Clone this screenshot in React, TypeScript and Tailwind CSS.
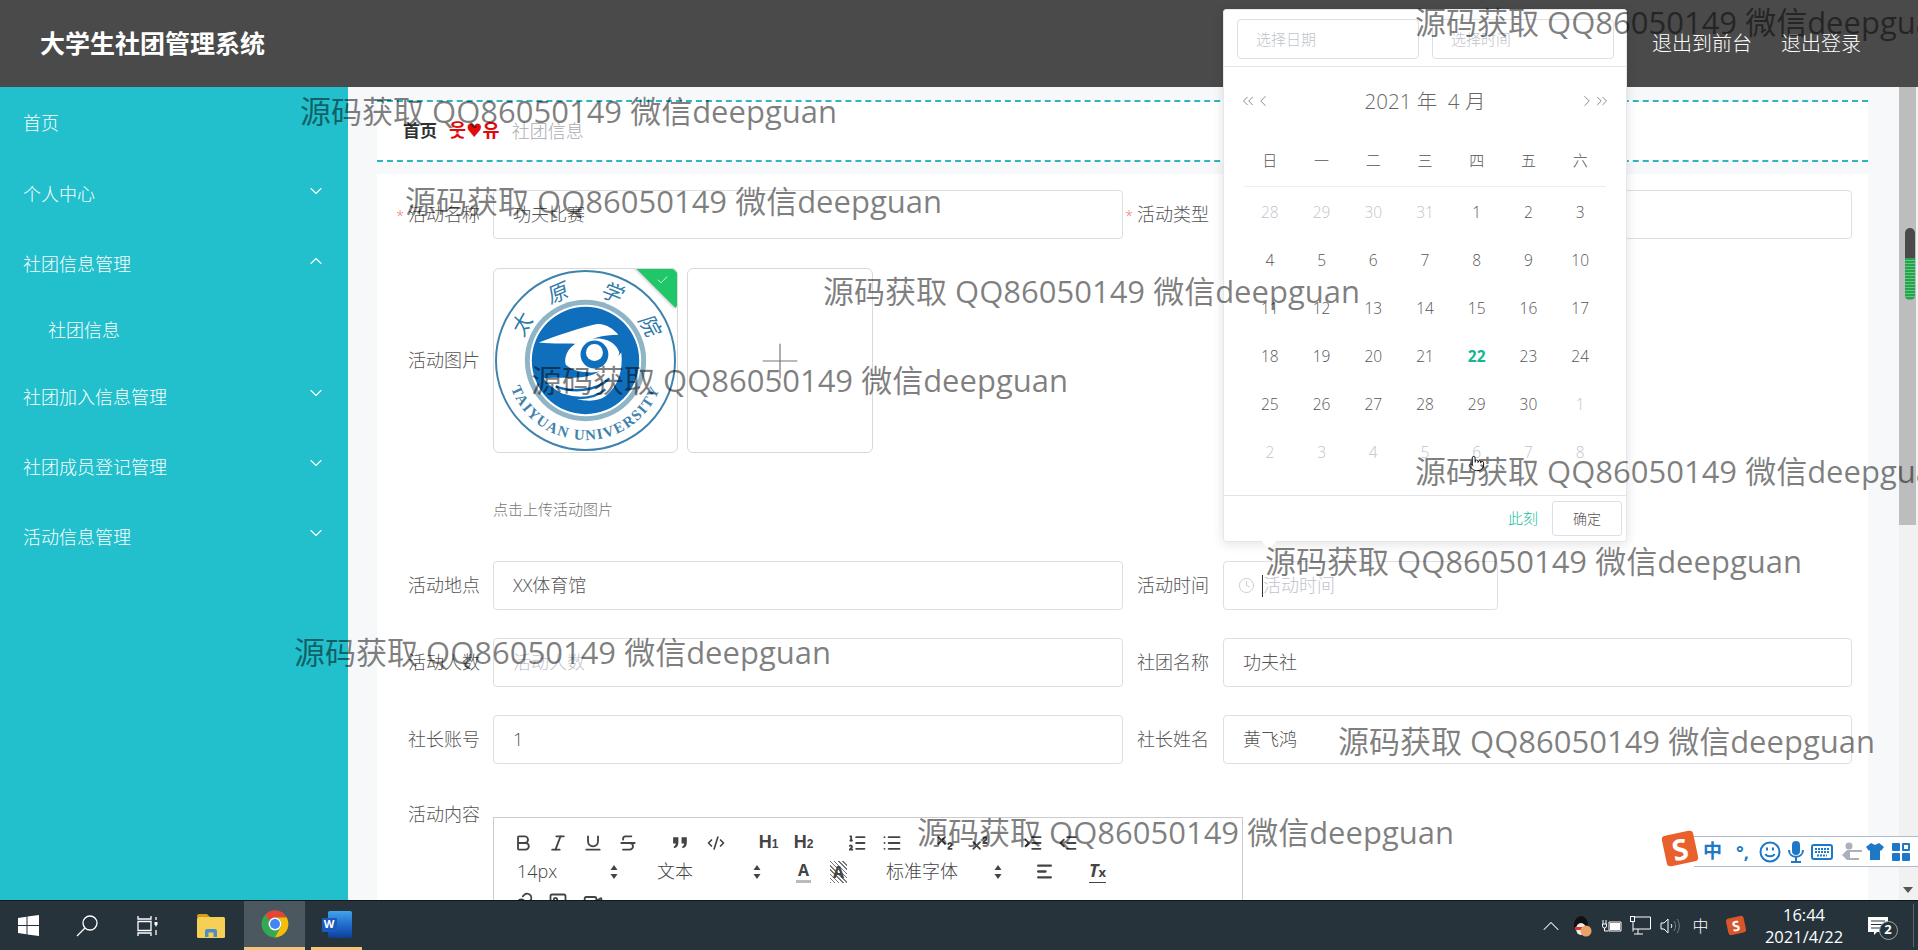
import {
  Bold,
  ChevronDown,
  ChevronLeft,
  ChevronRight,
  ChevronUp,
  ChevronsLeft,
  ChevronsRight,
  Clock,
  Check,
  CodeXml,
  Image,
  Indent,
  Italic,
  Link,
  List,
  ListOrdered,
  Outdent,
  Plus,
  Pointer,
  Strikethrough,
  Subscript,
  Superscript,
  Underline,
  Video,
} from 'lucide-react';
import type { ReactNode } from 'react';

const menu = [
  { label: '首页', h: 'h-[70px]' },
  { label: '个人中心', arrow: 'down', h: 'h-[73px]' },
  { label: '社团信息管理', arrow: 'up', h: 'h-[67px]' },
  { label: '社团信息', sub: true, h: 'h-[64px]' },
  { label: '社团加入信息管理', arrow: 'down', h: 'h-[70px]' },
  { label: '社团成员登记管理', arrow: 'down', h: 'h-[70px]' },
  { label: '活动信息管理', arrow: 'down', h: 'h-[70px]' },
];

const weeks = ['日', '一', '二', '三', '四', '五', '六'];
const days = [
  28, 29, 30, 31, 1, 2, 3, 4, 5, 6, 7, 8, 9, 10, 11, 12, 13, 14, 15, 16, 17, 18, 19, 20, 21, 22, 23, 24, 25, 26, 27, 28,
  29, 30, 1, 2, 3, 4, 5, 6, 7, 8,
];

const marks = [
  { id: 1, cls: 'left-[300px] top-[89px]' },
  { id: 2, cls: 'left-[405px] top-[179px]' },
  { id: 3, cls: 'left-[823px] top-[269px]' },
  { id: 4, cls: 'left-[531px] top-[358px]' },
  { id: 5, cls: 'left-[1415px] top-[0px]' },
  { id: 6, cls: 'left-[1415px] top-[449px]' },
  { id: 7, cls: 'left-[1265px] top-[539px]' },
  { id: 8, cls: 'left-[294px] top-[630px]' },
  { id: 9, cls: 'left-[1338px] top-[719px]' },
  { id: 10, cls: 'left-[917px] top-[810px]' },
];

const sealChars = [
  { ch: '太', deg: -61 },
  { ch: '原', deg: -23 },
  { ch: '学', deg: 21 },
  { ch: '院', deg: 61 },
];

function Field({ label, value, placeholder, star, width, labelCls }: { label: string; value?: string; placeholder?: string; star?: boolean; width: string; labelCls: string }) {
  return (
    <div className="flex">
      <div className={`${labelCls} text-right leading-[49px] text-[#555]`}>
        {star && <span className="mr-[4px] text-[14px] text-[#f56c6c]">*</span>}
        {label}
      </div>
      <div className={`${width} h-[49px] rounded-[4px] border border-[#dcdfe6] bg-white pl-[19px] leading-[47px]`}>
        {value ? <span className="text-[#555]">{value}</span> : <span className="text-[#c0c4cc]">{placeholder}</span>}
      </div>
    </div>
  );
}

function UniversityLogo() {
  return (
    <svg viewBox="0 0 184 184" className="h-full w-full">
      <defs>
        <path id="logo-bottom" d="M12 92a80 80 0 0 0 160 0" />
      </defs>
      <circle cx="92" cy="92" r="90" fill="#fff" stroke="#3f83ad" strokeWidth="2" />
      <circle cx="92" cy="92" r="61" fill="#8fb4c6" />
      <circle cx="92" cy="92" r="56" fill="#fff" />
      <circle cx="92" cy="92" r="54" fill="#106fbc" />
      <path d="M45 74C65 66 85 60 100 56c10-3 20 4 25 10-15 0-30 4-37 10-13-2-28 0-43-2z" fill="#fff" />
      <path d="M72 96c-3-16 14-28 34-26 12 1 18 8 20 14-2 12-14 20-28 20-10 0-20-2-26-8z" fill="#fff" />
      <circle cx="101" cy="86" r="14" fill="#106fbc" />
      <circle cx="101" cy="84" r="8.500" fill="#fff" />
      <path d="M50 110c10 15 45 30 62 18 13-10 18-26 16-44-8 10-16 16-24 20-14 8-34 4-54 6z" fill="#fff" />
      <path d="M62 118c16 6 40 6 54-8M70 127c14 4 30 4 42-6" fill="none" stroke="#106fbc" strokeWidth="2.500" />
      {sealChars.map((c) => (
        <text
          key={c.ch}
          transform={`translate(92 92) rotate(${c.deg}) translate(0 -66) skewX(-12)`}
          textAnchor="middle"
          fill="#2f7aa8"
          className="text-[21px] font-normal"
        >
          {c.ch}
        </text>
      ))}
      <text className="font-['Liberation_Serif',serif] text-[15px] font-bold" fill="#3f83ad" letterSpacing="1.500" textAnchor="middle">
        <textPath href="#logo-bottom" startOffset="50%">TAIYUAN UNIVERSITY</textPath>
      </text>
    </svg>
  );
}

function ToolBtn({ children }: { children: ReactNode }) {
  return <div className="flex h-[29px] w-[35px] items-center justify-center text-[#444]">{children}</div>;
}

function PickerArrows() {
  return (
    <svg width="8" height="16" viewBox="0 0 8 16" fill="#444">
      <path d="M4 1l3.500 5h-7zM4 15l3.500-5h-7z" />
    </svg>
  );
}

function Picker({ label, width, pad }: { label: string; width: string; pad: string }) {
  return (
    <div className={`${width} ${pad} flex h-[29px] items-center justify-between pr-[7px] text-[18px] text-[#444]`}>
      <span>{label}</span>
      <PickerArrows />
    </div>
  );
}

function Toolbar() {
  const icon = { size: 20, strokeWidth: 2.2 };
  return (
    <div className="flex flex-col pl-[11px] pt-[10px]">
      <div className="flex h-[29px] gap-[18px]">
        <div className="flex">
          <ToolBtn><Bold {...icon} /></ToolBtn>
          <ToolBtn><Italic {...icon} /></ToolBtn>
          <ToolBtn><Underline {...icon} /></ToolBtn>
          <ToolBtn><Strikethrough {...icon} /></ToolBtn>
        </div>
        <div className="flex">
          <ToolBtn>
            <svg width="19" height="19" viewBox="0 0 18 18" fill="#444">
              <path d="M2 4h5v5c0 3-1.500 5-4 5.500l-.6-1.500c1.400-.5 2-1.500 2-3H2zM10 4h5v5c0 3-1.500 5-4 5.500l-.6-1.500c1.400-.5 2-1.500 2-3H10z" />
            </svg>
          </ToolBtn>
          <ToolBtn><CodeXml size={18} strokeWidth={2.2} /></ToolBtn>
        </div>
        <div className="flex">
          <ToolBtn><span className="font-['Liberation_Sans',sans-serif] text-[18px] font-bold">H<span className="text-[12px]">1</span></span></ToolBtn>
          <ToolBtn><span className="font-['Liberation_Sans',sans-serif] text-[18px] font-bold">H<span className="text-[12px]">2</span></span></ToolBtn>
        </div>
        <div className="flex">
          <ToolBtn><ListOrdered {...icon} /></ToolBtn>
          <ToolBtn><List {...icon} /></ToolBtn>
        </div>
        <div className="flex">
          <ToolBtn><Subscript {...icon} /></ToolBtn>
          <ToolBtn><Superscript {...icon} /></ToolBtn>
        </div>
        <div className="flex">
          <ToolBtn><Indent {...icon} /></ToolBtn>
          <ToolBtn><Outdent {...icon} /></ToolBtn>
        </div>
      </div>
      <div className="flex h-[30px] gap-[18px]">
        <Picker label="14px" width="w-[120px]" pad="pl-[12px]" />
        <Picker label="文本" width="w-[125px]" pad="pl-[14px]" />
        <div className="flex">
          <ToolBtn>
            <span className="border-b-[3px] border-[#bbb] px-[2px] text-[16px] leading-[20px] font-bold">A</span>
          </ToolBtn>
          <ToolBtn>
            <span className="bg-[repeating-linear-gradient(45deg,#777_0px,#777_1px,#fff_1px,#fff_3px)] px-[3px] text-[16px] leading-[22px] font-bold">A</span>
          </ToolBtn>
        </div>
        <Picker label="标准字体" width="w-[135px]" pad="pl-[12px]" />
        <ToolBtn>
          <svg width="19" height="19" viewBox="0 0 18 18" stroke="#444" strokeWidth="2.200" strokeLinecap="round">
            <path d="M3 3.500h12M3 9h7M3 14.500h12" />
          </svg>
        </ToolBtn>
        <ToolBtn>
          <span className="border-b border-[#444] text-[18px] leading-[20px] font-bold italic">
            T<span className="text-[13px] not-italic">x</span>
          </span>
        </ToolBtn>
      </div>
      <div className="flex h-[30px]">
        <ToolBtn><Link {...icon} /></ToolBtn>
        <ToolBtn><Image {...icon} /></ToolBtn>
        <ToolBtn><Video {...icon} /></ToolBtn>
      </div>
    </div>
  );
}

function DatePopup() {
  return (
    <div className="absolute left-[1223px] top-[9px] z-10 flex h-[533px] w-[404px] flex-col rounded-[3px] border border-[#e4e7ed] bg-white text-[#555] shadow-[0_2px_12px_rgba(0,0,0,0.12)]">
      <div className="flex h-[57px] shrink-0 items-center gap-[13px] border-b border-[#e4e4e4] pl-[13px] pt-[1px]">
        <div className="h-[40px] w-[182px] rounded-[4px] border border-[#dcdfe6] pl-[18px] text-[15px] leading-[38px] text-[#c0c4cc]">选择日期</div>
        <div className="h-[40px] w-[182px] rounded-[4px] border border-[#dcdfe6] pl-[18px] text-[15px] leading-[38px] text-[#c0c4cc]">选择时间</div>
      </div>
      <div className="flex h-[68px] shrink-0 items-center px-[15px] text-[#666]">
        <ChevronsLeft size={18} strokeWidth={1} />
        <ChevronLeft size={18} strokeWidth={1} className="-ml-[3px]" />
        <div className="flex-1 text-center text-[20.500px]">2021 年&nbsp; 4 月</div>
        <ChevronRight size={18} strokeWidth={1} className="-mr-[3px]" />
        <ChevronsRight size={18} strokeWidth={1} />
      </div>
      <div className="mx-[20px] grid h-[52px] shrink-0 grid-cols-7 items-center border-b border-[#ebeef5] text-center text-[15px]">
        {weeks.map((w) => (
          <div key={w}>{w}</div>
        ))}
      </div>
      <div className="mx-[20px] mt-[1px] grid shrink-0 grid-cols-7 text-center text-[15.500px] leading-[48px]">
        {days.map((d, i) => {
          const other = i < 4 || i > 33;
          const today = i === 25;
          return (
            <div key={i} className={today ? 'font-bold text-[#14b88f]' : other ? 'text-[#c0c4cc]' : ''}>
              {d}
            </div>
          );
        })}
      </div>
      <div className="mt-[19px] flex flex-1 items-center justify-end border-t border-[#e4e4e4] pr-[4px]">
        <span className="mr-[14px] text-[15px] text-[#1cbf9c]">此刻</span>
        <div className="h-[35px] w-[70px] rounded-[3px] border border-[#dcdfe6] text-center text-[14px] leading-[33px]">确定</div>
      </div>
      <div className="absolute -bottom-[6px] left-[40px] h-[10px] w-[10px] rotate-45 bg-white" />
    </div>
  );
}

function Taskbar() {
  return (
    <div className="flex h-[50px] shrink-0 border-t border-[#10171c] bg-[#26333b] text-white">
      <div className="flex w-[56px] items-center justify-center">
        <svg width="21" height="21" viewBox="0 0 21 21" fill="#fff">
          <path d="M0 3l8.500-1.200V10H0zM9.500 1.600L21 0v10H9.500zM0 11h8.500v8.200L0 18zM9.500 11H21v10L9.500 19.400z" />
        </svg>
      </div>
      <div className="flex w-[62px] items-center justify-center">
        <svg width="22" height="22" viewBox="0 0 22 22" fill="none" stroke="#fff" strokeWidth="1.300">
          <circle cx="14" cy="8" r="7" />
          <path d="M9 13l-8 8" />
        </svg>
      </div>
      <div className="flex w-[60px] items-center justify-center">
        <svg width="22" height="20" viewBox="0 0 22 20" fill="none" stroke="#fff" strokeWidth="1.300">
          <path d="M1 0v3h13V0M1 20v-3h13v3M1 5.500h13v9H1zM19 1v3M19 8v2.500M19 14v5" />
          <rect x="17.500" y="6" width="3" height="3" fill="#fff" stroke="none" />
        </svg>
      </div>
      <div className="flex w-[66px] items-center justify-center">
        <svg width="28" height="24" viewBox="0 0 28 24">
          <path d="M0 2a2 2 0 0 1 2-2h8l3 3H0z" fill="#d99a1c" />
          <rect y="3" width="28" height="21" rx="1.500" fill="#f6cf57" />
          <path d="M8 23v-6a2 2 0 0 1 2-2h8a2 2 0 0 1 2 2v6h-3.500v-4.500h-5V23z" fill="#4a8fc9" />
        </svg>
      </div>
      <div className="flex w-[61px] items-center justify-center border-b-[3px] border-[#f5c37d] bg-[#4c5860]">
        <svg width="28" height="28" viewBox="0 0 24 24">
          <circle cx="12" cy="12" r="11.500" fill="#34a853" />
          <path d="M12 .5A11.500 11.500 0 0 1 22 6.500H12A5.500 5.500 0 0 0 7.200 9.250L3.800 4A11.500 11.500 0 0 1 12 .5z" fill="#ea4335" />
          <path d="M22 6.500A11.500 11.500 0 0 1 12 23.500l4.800-8.750A5.500 5.500 0 0 0 12 6.500z" fill="#fbbc05" />
          <circle cx="12" cy="12" r="5.500" fill="#fff" />
          <circle cx="12" cy="12" r="4.300" fill="#4285f4" />
        </svg>
      </div>
      <div className="w-[6px]" />
      <div className="flex w-[51px] items-center justify-center border-b-[3px] border-[#f5c37d]">
        <div className="relative h-[27px] w-[30px]">
          <div className="absolute right-0 top-0 h-[27px] w-[24px] rounded-[2px] bg-[linear-gradient(#41a5ee,#2b7cd3_35%,#185abd_70%,#103f91)]" />
          <div className="absolute left-0 top-[7px] flex h-[14px] w-[15px] items-center justify-center rounded-[1px] bg-[#185abd] text-[11px] font-bold text-white">W</div>
        </div>
      </div>
      <div className="flex-1" />
      <div className="flex w-[30px] items-center justify-center">
        <ChevronUp size={28} strokeWidth={0.900} />
      </div>
      <div className="flex w-[31px] items-center justify-center">
        <svg width="20" height="22" viewBox="0 0 20 22">
          <ellipse cx="9" cy="10" rx="7" ry="9" fill="#111" />
          <ellipse cx="9" cy="14" rx="5" ry="6" fill="#eee" />
          <path d="M3 12h12v3H3z" fill="#d33" />
          <circle cx="14" cy="16" r="5.500" fill="#e8a36b" />
        </svg>
      </div>
      <div className="flex w-[29px] items-center justify-center">
        <svg width="20" height="14" viewBox="0 0 20 14" fill="none" stroke="#fff">
          <path d="M7 3h12v9H7zM1 1v4M4 1v4M0.500 5h4v2a2 2 0 0 1-4 0zM2.500 9v3h4" />
          <rect x="8" y="4" width="10" height="7" fill="#fff" stroke="none" />
        </svg>
      </div>
      <div className="flex w-[29px] items-center justify-center">
        <svg width="21" height="19" viewBox="0 0 21 19" fill="none" stroke="#fff">
          <path d="M4.500 1H20.500V13H3M3 0.500v15M8 13v5M4 18h9" />
          <rect x="0.500" y="0.500" width="4" height="5" fill="#26333b" />
        </svg>
      </div>
      <div className="flex w-[30px] items-center justify-center">
        <svg width="21" height="18" viewBox="0 0 21 18" fill="none" stroke="#fff">
          <path d="M1 6h3l4-4v14l-4-4H1z" />
          <path d="M11 7c1 1 1 3 0 4" />
          <path d="M14 4c2 3 2 7 0 10M17 2c3 4 3 10 0 14" stroke="#78838a" />
        </svg>
      </div>
      <div className="flex w-[31px] items-center justify-center text-[16px]">中</div>
      <div className="flex w-[40px] items-center justify-center">
        <div className="flex h-[17px] w-[18px] -rotate-12 items-center justify-center rounded-[3px] bg-[#d9552b] text-[14px] font-bold">S</div>
      </div>
      <div className="flex w-[96px] flex-col items-center justify-center text-[16.500px] leading-[22px] font-normal">
        <span>16:44</span>
        <span>2021/4/22</span>
      </div>
      <div className="flex w-[51px] items-center justify-center">
        <div className="relative">
          <svg width="20" height="18" viewBox="0 0 20 18" fill="#fff">
            <path d="M0 0h20v15H9l-3 3v-3H0z" />
            <path d="M3 4h14M3 7.500h14M3 11h9" stroke="#26333b" />
          </svg>
          <div className="absolute -right-[10px] top-[4px] flex h-[19px] w-[19px] items-center justify-center rounded-full border border-[#9aa3a8] bg-[#26333b] text-[13px] font-bold">2</div>
        </div>
      </div>
      <div className="my-[3px] ml-[10px] w-px bg-[#5a646b]" />
      <div className="w-[4px]" />
    </div>
  );
}

function SogouBar() {
  return (
    <div className="absolute left-[1662px] top-[833px] z-20 flex h-[34px] w-[256px] items-end">
      <div className="absolute left-[2px] top-0 flex h-[31px] w-[32px] -rotate-12 items-center justify-center rounded-[4px] bg-[#e9602c] text-[29px] leading-none font-bold text-white">S</div>
      <div className="ml-[32px] flex h-[31px] flex-1 items-center border-y border-[#aebccb] bg-white text-[#1e78c8]">
        <span className="ml-[9px] w-[22px] text-[19px] font-bold">中</span>
        <span className="ml-[11px] w-[20px] text-[18px] font-bold leading-none">°,</span>
        <svg className="ml-[3px]" width="22" height="22" viewBox="0 0 22 22" fill="none" stroke="#1e78c8" strokeWidth="2">
          <circle cx="11" cy="11" r="9.500" />
          <path d="M6.500 13c1 3 8 3 9 0" />
          <path d="M8 6.500v3M14 6.500v3" />
        </svg>
        <svg className="ml-[7px]" width="16" height="22" viewBox="0 0 16 22" fill="#1e78c8">
          <rect x="4" y="0" width="8" height="14" rx="4" />
          <path d="M1 9c0 9 14 9 14 0M8 16v4M3 21h10" fill="none" stroke="#1e78c8" strokeWidth="2" />
        </svg>
        <svg className="ml-[7px]" width="22" height="16" viewBox="0 0 22 16" fill="none" stroke="#1e78c8" strokeWidth="2">
          <rect x="1" y="1" width="20" height="14" rx="2" />
          <path d="M4 5h14M4 8h14M6 11.500h10" strokeDasharray="2 1" />
        </svg>
        <svg className="ml-[8px]" width="22" height="20" viewBox="0 0 22 20" fill="#a9b2ba">
          <circle cx="8" cy="4" r="3.500" />
          <path d="M1 13l5-5h15v2H9v6h9v2H6z" />
        </svg>
        <svg className="ml-[3px]" width="18" height="17" viewBox="0 0 18 17" fill="#1e78c8">
          <path d="M5 0l4 2 4-2 5 4-3 4-1-1v10H4V7L3 8 0 4z" />
        </svg>
        <div className="ml-[8px] grid grid-cols-2 gap-[2px]">
          <div className="h-[8px] w-[8px] rounded-[1px] bg-[#1e78c8]" />
          <div className="h-[8px] w-[8px] rounded-[1px] border-2 border-[#1e78c8]" />
          <div className="h-[8px] w-[8px] rounded-[1px] bg-[#1e78c8]" />
          <div className="h-[8px] w-[8px] rounded-[1px] bg-[#1e78c8]" />
        </div>
      </div>
    </div>
  );
}

export default function App() {
  return (
    <div className="relative flex h-[950px] w-[1918px] flex-col overflow-hidden font-['Open_Sans','Noto_Sans_CJK_SC',sans-serif] text-[18px] font-light">
      <header className="flex h-[87px] shrink-0 items-center justify-between bg-[#4a4a4a] pl-[40px] pr-[57px] text-white">
        <div className="text-[25px] font-bold">大学生社团管理系统</div>
        <div className="flex gap-[29px] text-[20px]">
          <span>退出到前台</span>
          <span>退出登录</span>
        </div>
      </header>

      <div className="flex min-h-0 flex-1">
        <aside className="w-[348px] shrink-0 bg-[#22c0cc] pt-[1px] text-white">
          {menu.map((m) => (
            <div key={m.label} className={`${m.h} flex items-center justify-between ${m.sub ? 'pl-[48px]' : 'pl-[23px]'} pr-[22px]`}>
              <span>{m.label}</span>
              {m.arrow === 'down' && <ChevronDown size={20} strokeWidth={1.300} className="-mt-[8px]" />}
              {m.arrow === 'up' && <ChevronUp size={20} strokeWidth={1.300} className="-mt-[8px]" />}
            </div>
          ))}
        </aside>

        <main className="min-w-0 flex-1 overflow-hidden bg-[#f6f8fa] pl-[29px] pr-[31px] pt-[13px]">
          <div className="flex h-[62px] items-center gap-[12px] border-y-2 border-dashed border-[#2fb5bf] bg-white pl-[26px]">
            <span className="text-[17px] font-bold text-[#303133]">首页</span>
            <span className="text-[18.500px] leading-none font-bold text-[#e00b0b] font-['DejaVu_Sans','Noto_Sans_CJK_KR',sans-serif]">웃♥유</span>
            <span className="text-[#a8abb2]">社团信息</span>
          </div>

          <div className="mt-[12px] h-[800px] bg-white pr-[16px] pt-[16px]">
            <div className="flex">
              <Field label="活动名称" value="功夫比赛" star width="w-[630px]" labelCls="w-[116px] pr-[13px]" />
              <Field label="活动类型" star width="w-[629px]" labelCls="w-[100px] pr-[14px]" />
            </div>

            <div className="mt-[28px] flex">
              <div className="flex h-[185px] w-[116px] items-center justify-end pr-[13px] text-[#555]">活动图片</div>
              <div className="flex gap-[9px]">
                <div className="relative h-[185px] w-[185px] overflow-hidden rounded-[6px] border border-[#d9d9d9]">
                  <UniversityLogo />
                  <div className="absolute -right-[16px] -top-[4px] flex h-[26px] w-[58px] rotate-45 items-center justify-center bg-[#1fc769] shadow-[0_1px_3px_rgba(0,0,0,0.25)]">
                    <Check size={13} strokeWidth={1.500} className="mt-[4px] -rotate-45 text-white" />
                  </div>
                </div>
                <div className="flex h-[185px] w-[186px] items-center justify-center rounded-[6px] border border-[#d9d9d9]">
                  <Plus size={58} strokeWidth={0.500} className="text-[#777]" />
                </div>
              </div>
            </div>
            <div className="mt-[45px] pl-[116px] text-[15px] leading-[22px] text-[#777]">点击上传活动图片</div>

            <div className="mt-[41px] flex">
              <Field label="活动地点" value="XX体育馆" width="w-[630px]" labelCls="w-[116px] pr-[13px]" />
              <div className="flex">
                <div className="w-[100px] pr-[14px] text-right leading-[49px] text-[#555]">活动时间</div>
                <div className="flex h-[49px] w-[275px] items-center rounded-[4px] border border-[#dcdfe6] pl-[14px]">
                  <Clock size={17} strokeWidth={1.200} className="text-[#c0c4cc]" />
                  <div className="ml-[7px] h-[22px] w-px bg-[#333]" />
                  <span className="text-[#c0c4cc]">活动时间</span>
                </div>
              </div>
            </div>

            <div className="mt-[28px] flex">
              <Field label="活动人数" placeholder="活动人数" width="w-[630px]" labelCls="w-[116px] pr-[13px]" />
              <Field label="社团名称" value="功夫社" width="w-[629px]" labelCls="w-[100px] pr-[14px]" />
            </div>

            <div className="mt-[28px] flex">
              <Field label="社长账号" value="1" width="w-[630px]" labelCls="w-[116px] pr-[13px]" />
              <Field label="社长姓名" value="黄飞鸿" width="w-[629px]" labelCls="w-[100px] pr-[14px]" />
            </div>

            <div className="mt-[27px] flex">
              <div className="w-[116px] pr-[13px] text-right leading-[47px] text-[#555]">活动内容</div>
              <div className="mt-[26px] h-[200px] w-[750px] border border-[#ccc]">
                <Toolbar />
              </div>
            </div>
          </div>
        </main>

        <div className="relative flex w-[19px] shrink-0 flex-col bg-[#f1f1f1]">
          <div className="h-[438px] w-[17px] bg-[#bdbdbd]" />
          <svg className="absolute bottom-[7px] left-[4px]" width="10" height="6" viewBox="0 0 10 6" fill="#555">
            <path d="M0 0h10L5 6z" />
          </svg>
          <div className="absolute left-[6px] top-[141px] h-[72px] w-[10px] overflow-hidden rounded-full bg-[#4a4a4a]">
            <div className="mt-[30px] h-[42px] bg-[repeating-linear-gradient(#27a350_0px,#27a350_2px,#64c77f_2px,#64c77f_3px)]" />
          </div>
        </div>
      </div>

      <Taskbar />
      <DatePopup />
      <SogouBar />
      <Pointer size={17} strokeWidth={1.300} className="absolute left-[1468px] top-[455px] z-20 fill-white text-black" />

      {marks.map((m) => (
        <div key={m.id} className={`absolute z-30 whitespace-nowrap text-[31px] leading-[44px] font-normal text-black/50 ${m.cls}`}>
          源码获取 QQ86050149 微信deepguan
        </div>
      ))}
    </div>
  );
}
